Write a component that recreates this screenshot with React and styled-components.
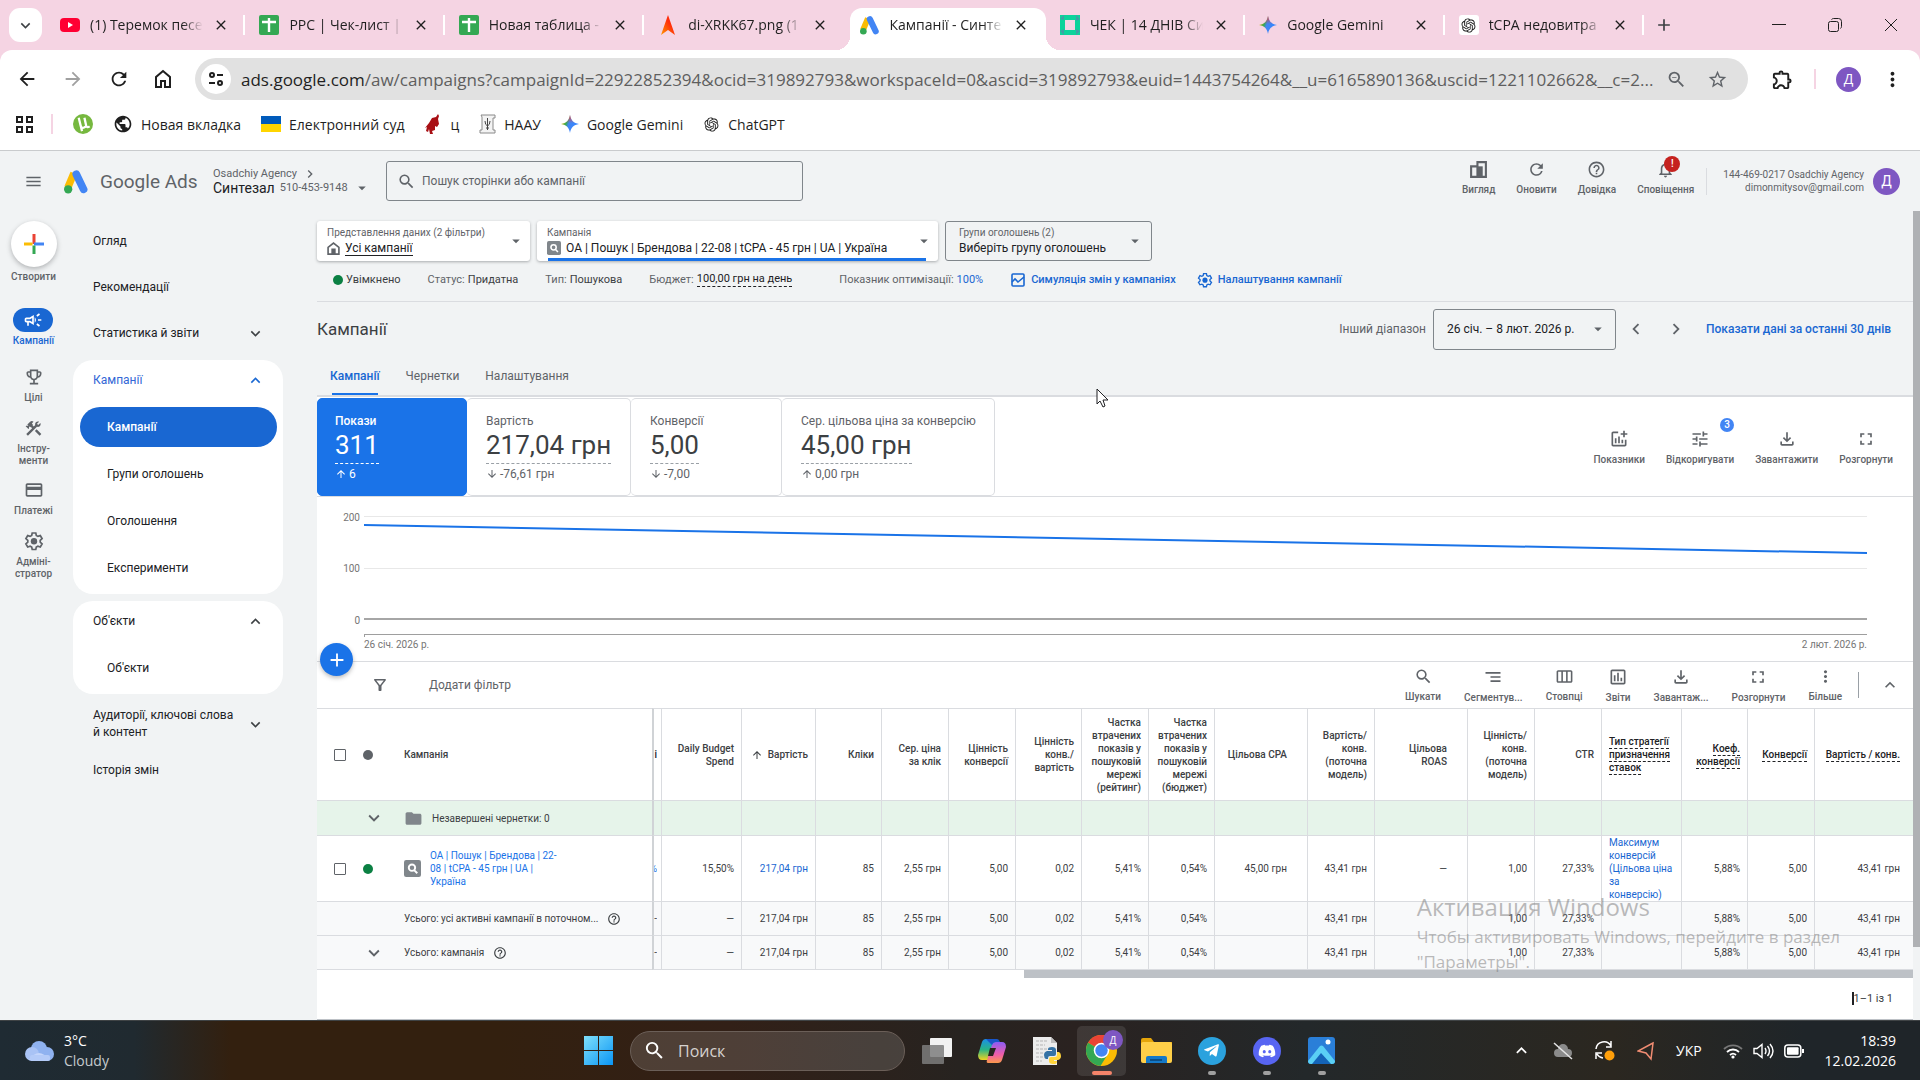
import React from 'react';
import styled, { createGlobalStyle, css } from 'styled-components';
import {
  MdMenu, MdSearch, MdRefresh, MdHelpOutline, MdNotificationsNone, MdArrowDropDown,
  MdChevronLeft, MdChevronRight, MdExpandMore, MdExpandLess, MdAdd, MdFullscreen,
  MdOutlineFileDownload, MdTune, MdOutlineAddchart, MdMoreVert, MdArrowUpward,
  MdArrowDownward, MdFolder, MdClose, MdStarBorder, MdOutlineExtension, MdZoomOut,
  MdSegment, MdOutlineFilterAlt, MdOutlineCampaign, MdOutlineEmojiEvents, MdConstruction,
  MdCreditCard, MdOutlineSettings, MdOutlineViewWeek, MdOutlineInsertChart, MdArrowBack,
  MdArrowForward, MdPublic,
} from 'react-icons/md';
import { FaDiscord, FaTelegramPlane } from 'react-icons/fa';
import { RiOpenaiFill } from 'react-icons/ri';

const ui = '"Open Sans", "Noto Sans", sans-serif';
const roboto = 'Roboto, "Liberation Sans", sans-serif';

const GlobalStyle = createGlobalStyle`
  * { box-sizing: border-box; }
  body { margin: 0; background: #f1f3f4; font-family: ${roboto}; font-size: 11px; color: #3c4043; }
  button, input, select { font: inherit; color: inherit; }
  button { background: none; border: 0; padding: 0; cursor: pointer; }
  a { color: #1967d2; text-decoration: none; }
  svg { display: block; flex: none; }
`;

const Screen = styled.div`
  position: relative;
  min-height: 100vh;
  display: flex;
  flex-direction: column;
`;

/* ---------- browser window ---------- */

const TabStrip = styled.div`
  height: 50px;
  display: flex;
  align-items: center;
  background: #f5d4e3;
  font-family: ${ui};
  padding-left: 9px;
`;
const TabSearch = styled.button`
  width: 33px;
  height: 34px;
  border-radius: 11px;
  background: #fff;
  display: flex;
  align-items: center;
  justify-content: center;
  margin-right: 4px;
`;
const TabList = styled.div`
  flex: 0 1 1598px;
  height: 100%;
  display: flex;
  min-width: 0;
`;
const Tab = styled.div`
  position: relative;
  flex: 1;
  min-width: 0;
  display: flex;
  align-items: center;
  gap: 10px;
  padding: 0 16px 0 14px;
  color: #1f1f1f;
  ${({ $active }) => $active ? css`
    margin: 8px 0 0 6px;
    padding: 0 17px 8px 10px;
    background: #fff;
    border-radius: 12px 12px 0 0;
    &::before, &::after {
      content: "";
      position: absolute;
      bottom: 0;
      width: 14px;
      height: 14px;
    }
    &::before { left: -14px; background: radial-gradient(circle at 0 0, transparent 14px, #fff 14px); }
    &::after { right: -14px; background: radial-gradient(circle at 100% 0, transparent 14px, #fff 14px); }
  ` : css`
    &::after {
      content: "";
      position: absolute;
      right: 0;
      width: 2px;
      height: 20px;
      background: ${({ $bare }) => $bare ? 'transparent' : '#fff'};
    }
  `}
`;
const TabTitle = styled.span`
  flex: 1;
  min-width: 0;
  overflow: hidden;
  white-space: nowrap;
  font-size: 14px;
  line-height: 20px;
  mask-image: linear-gradient(90deg, #000 82%, transparent);
`;
const NewTab = styled.button`
  margin-left: 10px;
`;
const WindowButtons = styled.div`
  margin-left: auto;
  display: flex;
  align-items: center;
  gap: 42px;
  padding-right: 22px;
`;
const Toolbar = styled.div`
  height: 58px;
  display: flex;
  align-items: center;
  background: linear-gradient(#f5d4e3 50%, #fff 50%);
  font-family: ${ui};
`;
const ToolbarInner = styled.div`
  flex: 1;
  height: 100%;
  min-width: 0;
  display: flex;
  align-items: center;
  background: #fff;
  border-radius: 12px 12px 0 0;
  padding: 0 16px;
`;
const NavButtons = styled.div`
  display: flex;
  align-items: center;
  gap: 24px;
  margin-right: 23px;
  color: #1f1f1f;
`;
const NavButton = styled.button`
  color: ${({ disabled }) => disabled ? '#a0a0a0' : '#1f1f1f'};
`;
const Omnibox = styled.div`
  flex: 1;
  min-width: 0;
  height: 42px;
  border-radius: 21px;
  background: #e1e1e1;
  display: flex;
  align-items: center;
  padding: 0 20px 0 6px;
  gap: 20px;
  color: #5f6368;
`;
const SiteInfo = styled.button`
  width: 30px;
  height: 30px;
  border-radius: 50%;
  background: #fff;
  display: flex;
  align-items: center;
  justify-content: center;
`;
const Url = styled.div`
  flex: 1;
  min-width: 0;
  margin: 0 -12px 0 -10px;
  overflow: hidden;
  white-space: nowrap;
  text-overflow: ellipsis;
  font-size: 17px;
  color: #5e5e5e;
  b { font-weight: 400; color: #1f1f1f; }
`;
const BrowserActions = styled.div`
  display: flex;
  align-items: center;
  gap: 20px;
  padding-left: 23px;
`;
const PinkRule = styled.span`
  width: 2px;
  height: 20px;
  background: #f5d4e3;
`;
const Avatar = styled.button`
  width: ${({ $size }) => $size}px;
  height: ${({ $size }) => $size}px;
  border-radius: 50%;
  background: #7e57c2;
  color: #fff;
  font-size: 14px;
  line-height: 1;
`;
const Bookmarks = styled.nav`
  height: 42px;
  display: flex;
  align-items: center;
  gap: 20px;
  padding: 0 16px 10px;
  background: #fff;
  font-family: ${ui};
  font-size: 14px;
`;
const AppsGroup = styled.div`
  display: flex;
  align-items: center;
  gap: 18px;
`;
const Bookmark = styled.a`
  display: flex;
  align-items: center;
  gap: 8px;
  color: #1f1f1f;
`;

/* ---------- ads header ---------- */

const Page = styled.div`
  flex: 1;
  display: flex;
  flex-direction: column;
  border-top: 1px solid #c9cbcd;
  background: #f1f3f4;
`;
const Header = styled.header`
  height: 60px;
  display: flex;
  align-items: center;
  padding: 0 20px 0 24px;
  color: #5f6368;
`;
const Brand = styled.div`
  display: flex;
  align-items: center;
  gap: 11px;
  margin-left: 21px;
  width: 149px;
  font-size: 19px;
  white-space: nowrap;
`;
const Account = styled.div`
  width: 173px;
  line-height: 14px;
`;
const AccountLine = styled.div`
  display: flex;
  align-items: center;
  gap: 5px;
  height: 14px;
  b { font-size: 14px; font-weight: 400; color: #202124; }
`;
const SearchBox = styled.label`
  width: 417px;
  height: 40px;
  border: 1px solid #80868b;
  border-radius: 3px;
  display: flex;
  align-items: center;
  gap: 4px;
  padding: 0 10px;
  input {
    flex: 1;
    border: 0;
    outline: 0;
    background: none;
    font-size: 12px;
    &::placeholder { color: #5f6368; opacity: 1; }
  }
`;
const HeaderTools = styled.div`
  margin-left: auto;
  display: flex;
  align-items: center;
  gap: 21px;
`;
const IconButton = styled.button`
  position: relative;
  display: flex;
  flex-direction: column;
  align-items: center;
  gap: 5px;
  font-size: 10px;
  font-weight: 500;
  line-height: 12px;
  white-space: nowrap;
  color: #5f6368;
  ${HeaderTools} > & { padding-bottom: 7px; }
`;
const Badge = styled.span`
  position: absolute;
  top: ${({ $top }) => $top}px;
  right: ${({ $right }) => $right}px;
  width: ${({ $size }) => $size}px;
  height: ${({ $size }) => $size}px;
  border-radius: 50%;
  background: ${({ $color }) => $color};
  color: #fff;
  font-size: 10px;
  font-weight: 500;
  line-height: ${({ $size }) => $size}px;
  text-align: center;
`;
const Profile = styled.div`
  display: flex;
  align-items: center;
  gap: 9px;
  margin-left: -9px;
  padding-left: 16px;
  border-left: 1px solid #dadce0;
  font-size: 10px;
  line-height: 13px;
  text-align: right;
`;

/* ---------- navigation ---------- */

const Body = styled.div`
  flex: 1;
  display: flex;
`;
const Rail = styled.nav`
  width: 67px;
  display: flex;
  flex-direction: column;
  align-items: center;
  padding-top: 10px;
`;
const CreateButton = styled.button`
  width: 46px;
  height: 46px;
  border-radius: 50%;
  background: #fff;
  box-shadow: 0 2px 5px rgba(60, 64, 67, .35);
  display: flex;
  align-items: center;
  justify-content: center;
`;
const CreateLabel = styled.span`
  margin: 4px 0 25px;
  font-size: 10px;
  font-weight: 500;
  line-height: 12px;
  color: #5f6368;
`;
const RailItem = styled.a`
  display: flex;
  flex-direction: column;
  align-items: center;
  gap: 3px;
  min-height: ${({ $height }) => $height}px;
  font-size: 10px;
  font-weight: 500;
  line-height: 12px;
  text-align: center;
  white-space: pre-line;
  color: ${({ $active }) => $active ? '#1967d2' : '#5f6368'};
`;
const RailIcon = styled.span`
  width: 40px;
  height: 24px;
  border-radius: 12px;
  display: flex;
  align-items: center;
  justify-content: center;
  ${({ $active }) => $active && 'background: #1967d2; color: #fff;'}
`;
const Sidebar = styled.nav`
  width: 222px;
  padding: 7px 6px 0;
  margin-right: 28px;
  font-size: 12px;
`;
const SideItem = styled.a`
  display: flex;
  align-items: center;
  justify-content: space-between;
  height: 46px;
  padding: 0 18px 0 20px;
  line-height: 17px;
  color: ${({ $open }) => $open ? '#3367d6' : '#202124'};
  svg { color: ${({ $open }) => $open ? '#1967d2' : '#3c4043'}; }
`;
const SideCard = styled.div`
  background: #fff;
  border-radius: 20px;
  margin: 4px 0 7px;
  padding-bottom: 4px;
  ${SideItem} { height: 41px; margin-bottom: 6px; }
`;
const SubItem = styled.a`
  display: flex;
  align-items: center;
  height: 40px;
  margin: 0 6px 7px 7px;
  padding-left: 27px;
  border-radius: 20px;
  font-weight: ${({ $active }) => $active ? 500 : 400};
  color: ${({ $active }) => $active ? '#fff' : '#202124'};
  background: ${({ $active }) => $active ? '#1967d2' : 'transparent'};
  &:last-child { margin-bottom: 2px; }
`;

/* ---------- main column ---------- */

const Main = styled.main`
  flex: 1;
  min-width: 0;
  padding-top: 10px;
  border-bottom: 1px solid #bdc1c6;
`;
const PageScroll = styled.div`
  width: 7px;
  background: #f1f3f4;
  &::before {
    content: "";
    display: block;
    height: 91%;
    background: #afb1b4;
  }
`;
const Pickers = styled.div`
  display: flex;
  gap: 7px;
`;
const Picker = styled.label`
  position: relative;
  width: ${({ $width }) => $width}px;
  height: 40px;
  display: flex;
  align-items: center;
  padding: ${({ $outlined }) => $outlined ? '0 7px 0 13px' : '0 5px 0 10px'};
  border-radius: 3px;
  background: ${({ $outlined }) => $outlined ? 'none' : '#fff'};
  border: ${({ $outlined }) => $outlined ? '1px solid #80868b' : 0};
  box-shadow: ${({ $outlined }) => $outlined ? 'none' : '0 1px 3px rgba(60, 64, 67, .4)'};
  ${({ $selected }) => $selected && css`
    &::after {
      content: "";
      position: absolute;
      left: 11px;
      right: 12px;
      bottom: 0;
      height: 3px;
      background: #1a73e8;
    }
  `}
`;
const PickerText = styled.span`
  flex: 1;
  min-width: 0;
  font-size: 10px;
  line-height: 14px;
  color: #5f6368;
`;
const PickerValue = styled.span`
  display: flex;
  align-items: center;
  gap: 5px;
  height: 16px;
`;
const Select = styled.select`
  appearance: none;
  border: 0;
  outline: 0;
  padding: 0;
  background: none;
  font-size: 12px;
  line-height: 14px;
  color: #202124;
  ${({ $underline }) => $underline && 'border-bottom: 1px solid #202124; border-radius: 0;'}
`;
const StatusRow = styled.div`
  display: flex;
  align-items: center;
  height: 41px;
  padding: 0 0 3px 16px;
  border-bottom: 1px solid #dadce0;
  color: #5f6368;
  gap: 27px;
  white-space: nowrap;
  b { font-weight: 400; color: #3c4043; }
`;
const StatusItem = styled.span`
  display: flex;
  align-items: center;
  gap: 3px;
  margin-right: ${({ $after }) => $after || 0}px;
`;
const StatusLink = styled.a`
  display: flex;
  align-items: center;
  gap: 5px;
  margin-right: -6px;
  font-weight: 500;
`;
const Dot = styled.span`
  display: block;
  flex: none;
  width: 10px;
  height: 10px;
  border-radius: 50%;
  background: ${({ $color }) => $color};
`;
const Dashed = styled.span`
  padding-bottom: 1px;
  border-bottom: 1px dashed #202124;
  color: #202124;
`;
const TitleRow = styled.div`
  display: flex;
  align-items: center;
  height: 54px;
  padding-right: 22px;
`;
const Title = styled.h1`
  margin: 0 auto 0 0;
  font-size: 17px;
  font-weight: 400;
  color: #3c4043;
`;
const RangeLabel = styled.label`
  display: flex;
  align-items: center;
  gap: 7px;
  font-size: 12px;
  color: #5f6368;
`;
const RangeBox = styled.span`
  width: 183px;
  height: 41px;
  display: flex;
  align-items: center;
  justify-content: space-between;
  padding: 0 8px 0 13px;
  border: 1px solid #80868b;
  border-radius: 3px;
`;
const RangeArrows = styled.div`
  display: flex;
  gap: 18px;
  margin: 0 19px 0 9px;
  color: #5f6368;
`;
const RangeLink = styled.a`
  font-size: 12px;
  font-weight: 500;
`;
const Tabs = styled.div`
  display: flex;
  height: 41px;
  gap: 26px;
  padding-left: 13px;
  border-bottom: 2px solid #dadce0;
`;
const PageTab = styled.button`
  position: relative;
  font-size: 12px;
  font-weight: ${({ $active }) => $active ? 500 : 400};
  color: ${({ $active }) => $active ? '#1967d2' : '#5f6368'};
  ${({ $active }) => $active && css`
    &::after {
      content: "";
      position: absolute;
      left: 2px;
      right: 2px;
      bottom: 0;
      height: 2px;
      background: #1a73e8;
    }
  `}
`;
const Metrics = styled.div`
  display: flex;
  align-items: center;
  background: #fff;
  height: 100px;
  border-bottom: 1px solid #dadce0;
`;
const Metric = styled.button`
  width: ${({ $width }) => $width}px;
  height: 98px;
  padding: 4px 18px 0 ${({ $active }) => $active ? 17 : 19}px;
  border: 1px solid ${({ $active }) => $active ? '#1a73e8' : '#dadce0'};
  border-left-width: ${({ $active }) => $active ? 1 : 0}px;
  border-radius: 5px;
  background: ${({ $active }) => $active ? '#1a73e8' : '#fff'};
  color: ${({ $active }) => $active ? '#fff' : '#5f6368'};
  text-align: left;
  white-space: nowrap;
`;
const MetricLabel = styled.div`
  font-size: 12px;
  font-weight: ${({ $bold }) => $bold ? 500 : 400};
  line-height: 14px;
`;
const MetricValue = styled.div`
  display: inline-block;
  font-size: 26px;
  line-height: 35px;
  border-bottom: 1px dashed ${({ $active }) => $active ? '#fff' : '#9aa0a6'};
  color: ${({ $active }) => $active ? '#fff' : '#3c4043'};
`;
const MetricDelta = styled.div`
  display: flex;
  align-items: center;
  gap: 2px;
  font-size: 12px;
  line-height: 20px;
`;
const ChartTools = styled.div`
  margin-left: auto;
  display: flex;
  gap: 21px;
  padding: 2px 20px 0 0;
`;
const Chart = styled.div`
  height: 164px;
  background: #fff;
  padding-right: 46px;
  text { font-size: 10px; fill: #757575; }
`;
const FilterBar = styled.div`
  position: relative;
  display: flex;
  align-items: center;
  height: 47px;
  padding: 0 13px 0 54px;
  background: #fff;
  border-top: 1px solid #dadce0;
  color: #5f6368;
`;
const Fab = styled.button`
  position: absolute;
  left: 3px;
  top: -19px;
  width: 33px;
  height: 33px;
  border-radius: 50%;
  background: #1a73e8;
  color: #fff;
  display: flex;
  align-items: center;
  justify-content: center;
  box-shadow: 0 2px 4px rgba(60, 64, 67, .35);
`;
const AddFilter = styled.button`
  margin-left: 40px;
  font-size: 12px;
  color: #5f6368;
`;
const TableTools = styled.div`
  margin-left: auto;
  display: flex;
  align-items: center;
  gap: 23px;
`;
const Collapse = styled.button`
  height: 26px;
  border-left: 1px solid #9aa0a6;
  padding-left: 21px;
  margin-left: -7px;
`;

/* ---------- table ---------- */

const Table = styled.table`
  width: 100%;
  table-layout: fixed;
  border-collapse: separate;
  border-spacing: 0;
  background: #fff;
  font-size: 10px;
  line-height: 13px;
  th, td {
    padding: 0 7px 0 0;
    border-left: 1px solid #dadce0;
    border-bottom: 1px solid #dadce0;
    text-align: right;
    font-weight: 400;
  }
  th { border-top: 1px solid #dadce0; font-weight: 500; white-space: pre-line; }
  th:nth-child(-n+3), td:nth-child(-n+3) { border-left: 0; text-align: left; }
  th:nth-child(4), td:nth-child(4) { border-left: 2px solid #d0d3d6; padding: 0; }
  th:nth-child(13), td:nth-child(13), th:nth-child(15), td:nth-child(15) { padding-right: 20px; }
  th:nth-child(18), td:nth-child(18) { padding: 0 7px; text-align: left; }
  th:last-child, td:last-child { padding-right: 13px; }
`;
const Row = styled.tr`
  height: ${({ $height }) => $height}px;
  background: ${({ $tone }) => $tone || '#fff'};
`;
const Check = styled.input`
  appearance: none;
  display: block;
  width: 12px;
  height: 12px;
  margin: 0 0 0 17px;
  border: 1px solid #5f6368;
  border-radius: 1px;
`;
const Lead = styled.div`
  padding-left: 8px;
  color: #5f6368;
`;
const NameCell = styled.div`
  display: flex;
  align-items: center;
  gap: 9px;
  padding-left: 5px;
  color: #3c4043;
  a { width: 132px; color: #1a73e8; }
`;
const Peek = styled.div`
  width: 3px;
  overflow: hidden;
  direction: rtl;
  color: ${({ $blue }) => $blue ? '#1a73e8' : '#3c4043'};
`;
const SortedHead = styled.span`
  display: flex;
  align-items: center;
  justify-content: flex-end;
  gap: 5px;
`;
const TableScroll = styled.div`
  height: 8px;
  background: #fff;
  &::before {
    content: "";
    display: block;
    width: 55.7%;
    height: 8px;
    margin-left: auto;
    background: #bdc1c6;
  }
`;
const Pager = styled.div`
  height: 41px;
  display: flex;
  align-items: center;
  justify-content: flex-end;
  padding-right: 20px;
  background: #fff;
  font-size: 11px;
  span { border-left: 2px solid #202124; }
`;

/* ---------- desktop ---------- */

const Watermark = styled.div`
  position: absolute;
  right: 80px;
  bottom: 106px;
  font-family: ${ui};
  font-size: 17px;
  line-height: 25px;
  color: rgba(120, 120, 120, .5);
  pointer-events: none;
  strong { display: block; font-size: 24px; font-weight: 400; line-height: 34px; }
`;
const Pointer = styled.svg`
  position: absolute;
  left: 1096px;
  top: 388px;
`;
const Taskbar = styled.footer`
  height: 60px;
  display: grid;
  grid-template-columns: 1fr auto 1fr;
  align-items: center;
  padding: 0 24px;
  border-top: 1px solid #3f4345;
  background: linear-gradient(90deg, #1f2b33 0, #202a30 7%, #33200f 12%, #33200f 26%, #322017 38%, #272320 50%, #2a2220 56%, #23282a 68%, #2b2720 84%, #1f2529 94%);
  color: #fff;
  font-family: ${ui};
  font-size: 14px;
  line-height: 20px;
`;
const Weather = styled.div`
  display: flex;
  align-items: center;
  gap: 9px;
  span { color: #c5cacd; }
`;
const Dock = styled.div`
  display: flex;
  align-items: center;
  padding-left: 13px;
`;
const StartSearch = styled.label`
  width: 275px;
  height: 40px;
  margin: 0 4px 0 17px;
  border: 1px solid #6b5f58;
  border-radius: 20px;
  background: rgba(255, 255, 255, .14);
  display: flex;
  align-items: center;
  gap: 10px;
  padding: 0 14px 0 12px;
  input {
    min-width: 0;
    flex: 1;
    border: 0;
    outline: 0;
    background: none;
    font-size: 16px;
    &::placeholder { color: #d6d2cf; opacity: 1; }
  }
`;
const DockApp = styled.button`
  position: relative;
  width: 49px;
  height: 50px;
  margin: 0 3px;
  border-radius: 5px;
  display: flex;
  align-items: center;
  justify-content: center;
  background: ${({ $current }) => $current ? 'rgba(255, 255, 255, .1)' : 'none'};
  &::after {
    content: "";
    position: absolute;
    bottom: 1px;
    width: ${({ $current }) => $current ? 20 : 8}px;
    height: 4px;
    border-radius: 2px;
    background: ${({ $current, $running }) => $current ? '#f4846a' : $running ? '#a0a0a0' : 'transparent'};
  }
`;
const Round = styled.span`
  width: 28px;
  height: 28px;
  border-radius: 50%;
  display: flex;
  align-items: center;
  justify-content: center;
  color: #fff;
  background: ${({ $color }) => $color};
`;
const Tray = styled.div`
  justify-self: end;
  display: flex;
  align-items: center;
  gap: 21px;
`;
const TrayGroup = styled.div`
  display: flex;
  align-items: center;
  gap: 10px;
`;
const Clock = styled.div`
  text-align: right;
`;

/* ---------- drawings ---------- */

const AdsLogo = ({ size = 25 }) => (
  <svg width={size} height={size} viewBox="0 0 24 24">
    <path d="M9.500 4L3.600 18" stroke="#fbbc04" strokeWidth="7" strokeLinecap="butt" />
    <path d="M11.800 5l7 14.500" stroke="#4285f4" strokeWidth="7.400" strokeLinecap="round" />
    <circle cx="4" cy="19.500" r="4" fill="#34a853" />
  </svg>
);

const YouTube = () => (
  <svg width="20" height="20" viewBox="0 0 20 20">
    <rect y="3" width="20" height="14" rx="4" fill="#f03" />
    <path d="M8 7l5 3-5 3z" fill="#fff" />
  </svg>
);

const Sheets = () => (
  <svg width="20" height="20" viewBox="0 0 20 20">
    <rect width="20" height="20" rx="2" fill="#34a853" />
    <path d="M10 3v14M3 7h14" stroke="#fff" strokeWidth="2.400" />
  </svg>
);

const RedArrow = () => (
  <svg width="20" height="20" viewBox="0 0 20 20">
    <defs>
      <linearGradient id="flame" x1="0" y1="1" x2="1" y2="0">
        <stop offset="0" stopColor="#ff9800" />
        <stop offset=".6" stopColor="#ff2d0a" />
      </linearGradient>
    </defs>
    <path d="M10 0l7 20-7-5-7 5z" fill="url(#flame)" />
  </svg>
);

const GreenSquare = () => (
  <svg width="20" height="20" viewBox="0 0 20 20">
    <rect x="2.500" y="2.500" width="15" height="15" fill="none" stroke="#0cd39b" strokeWidth="5" />
    <path d="M0 4l4-4v5zM16 0l4 4-4 2zM0 16l4-2v6zM20 16l-4 4v-6z" fill="#3f9fa5" />
  </svg>
);

const Gemini = () => (
  <svg width="18" height="20" viewBox="0 0 20 20">
    <defs>
      <linearGradient id="gem" x1="0" y1=".3" x2="1" y2=".6">
        <stop offset="0" stopColor="#fbbc04" />
        <stop offset=".3" stopColor="#34a853" />
        <stop offset=".45" stopColor="#4285f4" />
        <stop offset="1" stopColor="#3186ff" />
      </linearGradient>
      <linearGradient id="gemTop" x1="0" y1="0" x2="0" y2="1">
        <stop offset="0" stopColor="#ea4335" />
        <stop offset=".45" stopColor="#ea4335" stopOpacity="0" />
      </linearGradient>
    </defs>
    <path d="M10 0c1 6 4 9 10 10-6 1-9 4-10 10-1-6-4-9-10-10 6-1 9-4 10-10z" fill="url(#gem)" />
    <path d="M10 0c1 6 4 9 10 10-6 1-9 4-10 10-1-6-4-9-10-10 6-1 9-4 10-10z" fill="url(#gemTop)" />
  </svg>
);

const GptTile = styled.span`
  width: 20px;
  height: 20px;
  border-radius: 3px;
  background: #fff;
  display: flex;
  align-items: center;
  justify-content: center;
`;

const Torrent = () => (
  <svg width="20" height="20" viewBox="0 0 21 21">
    <circle cx="10.500" cy="10.500" r="10.500" fill="#76b83f" />
    <path d="M6 4l2 8q1 4 4 2l2-1-2-9M13.500 12q1 3 4 1M8 12l1.500 6" fill="none" stroke="#fff" strokeWidth="2.400" />
  </svg>
);

const Flag = () => (
  <svg width="20" height="16" viewBox="0 0 20 16">
    <rect width="20" height="8" fill="#005bbb" />
    <rect y="8" width="20" height="8" fill="#ffd500" />
  </svg>
);

const RedFigure = () => (
  <svg width="18" height="20" viewBox="0 0 18 20">
    <path d="M14 0l1 2-1 3 1 5-2 3-2-1v4l-3 1 1 3H6l-1-5-1 3-2-1 1-4-2 1 4-5 3-5 4-1z" fill="#a80f14" />
  </svg>
);

const Parchment = () => (
  <svg width="17" height="20" viewBox="0 0 17 20" fill="none" stroke="#8a8a8a">
    <path d="M2 1h14v3h-2v12h2v3H1v-3h2V3z" fill="#f3f3f3" />
    <path d="M8.500 4v12M6 7q0 4 2.500 5Q11 11 11 7M7 14h3" stroke="#444" />
  </svg>
);

const AppsGrid = () => (
  <svg width="17" height="18" viewBox="0 0 17 18" fill="none" stroke="#1f1f1f" strokeWidth="2">
    <path d="M1 2h5v5H1zM11 2h5v5h-5zM1 12h5v5H1zM11 12h5v5h-5z" />
  </svg>
);

const HomeArch = () => (
  <svg width="13" height="13" viewBox="0 0 12 12" fill="none" stroke="#5f6368" strokeWidth="1.500">
    <path d="M1 11.200V5L6 1l5 4v6.200z" />
    <path d="M4 6h4v6H4z" fill="#5f6368" stroke="none" />
  </svg>
);

const BrowserHome = () => (
  <svg width="18" height="20" viewBox="0 0 18 20" fill="none" stroke="#1f1f1f" strokeWidth="2">
    <path d="M2 18V8l7-6 7 6v10h-5v-6H7v6z" />
  </svg>
);

const SearchTile = ({ size = 14 }) => (
  <svg width={size} height={size} viewBox="0 0 16 16">
    <rect width="16" height="16" rx="2" fill="#80868b" />
    <circle cx="7.500" cy="7.200" r="3" fill="none" stroke="#fff" strokeWidth="1.800" />
    <path d="M9.500 9.500l3 3" stroke="#fff" strokeWidth="1.800" />
  </svg>
);

const TuneDots = () => (
  <svg width="16" height="14" viewBox="0 0 16 14" fill="none" stroke="#1f1f1f" strokeWidth="2">
    <circle cx="4" cy="3" r="2" />
    <path d="M9 3h6M1 11h6" />
    <circle cx="12" cy="11" r="2" />
  </svg>
);

const CreatePlus = () => (
  <svg width="20" height="20" viewBox="0 0 20 20">
    <path d="M8.500 0h3v10h-3z" fill="#ea4335" />
    <path d="M0 8.500h8.500v3H0z" fill="#fbbc04" />
    <path d="M10 8.500h10v3H10z" fill="#4285f4" />
    <path d="M8.500 11.500h3V20h-3z" fill="#34a853" />
  </svg>
);

const Gear = ({ size }) => (
  <svg width={size} height={size} viewBox="0 0 20 20">
    <path d="M8.200 2h3.600l.5 2.500 1.600.9 2.400-.8 1.800 3.100-1.900 1.700v1.800l1.900 1.700-1.800 3.100-2.400-.8-1.600.9-.5 2.400H8.200l-.5-2.400-1.600-.9-2.400.8-1.800-3.100 1.900-1.700V9.400L1.900 7.700l1.800-3.100 2.400.8 1.600-.9z" fill="none" stroke="currentColor" strokeWidth="1.700" />
    <circle cx="10" cy="10.200" r="3.200" fill="currentColor" />
  </svg>
);

const ViewIcon = () => (
  <svg width="19" height="19" viewBox="0 0 18 18" fill="none" stroke="#5f6368" strokeWidth="2">
    <path d="M8 5V2h8v14H8M2 6h6v10H2z" />
    <path d="M8 6h5v10H8z" fill="#5f6368" stroke="none" />
  </svg>
);

const Simulation = () => (
  <svg width="16" height="16" viewBox="0 0 16 16" fill="none" stroke="#1967d2" strokeWidth="1.600">
    <rect x="2" y="2" width="12" height="12" rx="1" />
    <path d="M2 10l3-3 3 3 6-5" />
  </svg>
);

const WinLogo = () => (
  <svg width="29" height="29" viewBox="0 0 29 29">
    <defs>
      <linearGradient id="win" x1="0" y1="0" x2="1" y2="1">
        <stop offset="0" stopColor="#7fe0fb" />
        <stop offset="1" stopColor="#0a95f5" />
      </linearGradient>
    </defs>
    <path d="M0 0h14v14H0zM15 0h14v14H15zM0 15h14v14H0zM15 15h14v14H15z" fill="url(#win)" />
  </svg>
);

const Cloud = () => (
  <svg width="31" height="22" viewBox="0 0 31 22">
    <circle cx="15" cy="9" r="8" fill="#8fb2f0" />
    <circle cx="8" cy="14" r="7" fill="#a9c3f5" />
    <circle cx="23" cy="14" r="7" fill="#8fb2f0" />
    <path d="M5 20q10-14 20 0z" fill="#c4d6fb" />
    <rect x="6" y="15" width="20" height="6" rx="2" fill="#b4cbf8" />
  </svg>
);

const TaskView = () => (
  <svg width="30" height="28" viewBox="0 0 30 28">
    <rect x="8" y="1" width="22" height="19" rx="1" fill="#f2f2f2" />
    <rect y="8" width="22" height="19" rx="1" fill="#7c7c7c" fillOpacity=".85" />
  </svg>
);

const Copilot = () => (
  <svg width="28" height="26" viewBox="0 0 28 26">
    <defs>
      <linearGradient id="copA" x1="0" y1="0" x2="0" y2="1">
        <stop offset="0" stopColor="#1a8fe8" />
        <stop offset=".5" stopColor="#28b487" />
        <stop offset="1" stopColor="#f2d21f" />
      </linearGradient>
      <linearGradient id="copB" x1="0" y1="0" x2="0" y2="1">
        <stop offset="0" stopColor="#8b5cf6" />
        <stop offset=".6" stopColor="#ef5da8" />
        <stop offset="1" stopColor="#fb9a4b" />
      </linearGradient>
    </defs>
    <path d="M18 1q2 0 1 3l-5 15q-1 3-4 3H4q-4 0-4-5L4 4q1-3 4-3z" fill="url(#copA)" />
    <path d="M10 25q-2 0-1-3l5-15q1-3 4-3h6q4 0 4 5l-4 13q-1 3-4 3z" fill="url(#copB)" />
    <path d="M12 10h6l-3 8h-5z" fill="#26241f" />
    <path d="M8 1h11q2 0 3 3h-4q-3 0-4 3z" fill="#1856c9" />
  </svg>
);

const PythonFile = () => (
  <svg width="30" height="28" viewBox="0 0 30 28">
    <path d="M1 0h18l6 6v22H1z" fill="#ececec" />
    <path d="M19 0l6 6h-6z" fill="#bdbdbd" />
    <path d="M4 4h11M4 8h9M4 12h11M4 16h7M4 20h8M4 24h6" stroke="#b4b4b4" strokeDasharray="3 1" />
    <path d="M20 10q4 0 4 3v4q0 2-2 2h-4q-2 0-2 2v1h-2q-2-1-2-4t3-4h5v-1h-4v-1q0-2 4-2z" fill="#3572a5" />
    <path d="M21 27q-4 0-4-3v-2q0-2 2-2h4q2 0 2-2v-3h2q2 1 2 4t-3 4h-4v1h3q0 3-2 3z" fill="#ffd43b" />
  </svg>
);

const Chrome = () => (
  <svg width="31" height="31" viewBox="0 0 30 30">
    <circle cx="15" cy="15" r="15" fill="#fbbc04" />
    <path d="M15 15L2 7.500A15 15 0 0 1 28 7.500z" fill="#ea4335" />
    <path d="M15 15L2 7.500A15 15 0 0 0 14 30l7.500-12z" fill="#34a853" />
    <circle cx="15" cy="15" r="7.500" fill="#fff" />
    <circle cx="15" cy="15" r="6" fill="#4285f4" />
  </svg>
);

const Explorer = () => (
  <svg width="31" height="28" viewBox="0 0 31 28">
    <path d="M0 3q0-2 2-2h8l3 4h18v8H0z" fill="#e5a50a" />
    <rect y="5" width="31" height="21" rx="2" fill="#ffcf48" />
    <path d="M5 26v-5q0-2 2-2h17q2 0 2 2v5z" fill="#1579c8" />
    <path d="M9 23h12" stroke="#0b4f88" strokeWidth="2" />
  </svg>
);

const Photos = () => (
  <svg width="27" height="27" viewBox="0 0 27 27">
    <rect width="27" height="27" rx="3" fill="#2a7fd8" />
    <path d="M0 24L12 9q1.500-1 3 0l12 15q0 3-3 3H3q-3 0-3-3z" fill="#5ad0f5" />
    <path d="M4 27l9-11 10 11z" fill="#1464b8" />
    <circle cx="20" cy="5" r="2.500" fill="#fff" />
  </svg>
);

const TrayIcons = {
  cloud: (
    <svg width="20" height="18" viewBox="0 0 20 18">
      <path d="M5 15a4 4 0 0 1 0-8 5 5 0 0 1 10 0 4 4 0 0 1 0 8z" fill="#8b8b8b" />
      <path d="M1 1l18 16" stroke="#e5e5e5" strokeWidth="1.500" />
    </svg>
  ),
  sync: (
    <svg width="22" height="22" viewBox="0 0 22 22" fill="none" stroke="#fff" strokeWidth="1.500">
      <path d="M2 9a8 8 0 0 1 15-3M17 1v6h-5M9 18a8 8 0 0 1-6-4M2 19v-6h6" />
      <circle cx="15.500" cy="15.500" r="5" fill="#ff9f0a" stroke="none" />
    </svg>
  ),
  location: (
    <svg width="18" height="20" viewBox="0 0 18 20" fill="none" stroke="#f08c72" strokeWidth="1.500">
      <path d="M16 2L1 10l8 2 5 6z" />
    </svg>
  ),
  wifi: (
    <svg width="20" height="16" viewBox="0 0 20 16" fill="none" strokeWidth="1.800">
      <path d="M1 6a13 13 0 0 1 18 0" stroke="#777" />
      <path d="M4 9a8.500 8.500 0 0 1 12 0M7 12a4.500 4.500 0 0 1 6 0" stroke="#fff" />
      <circle cx="10" cy="14" r="1.600" fill="#fff" />
    </svg>
  ),
  volume: (
    <svg width="21" height="16" viewBox="0 0 21 16" fill="none" stroke="#fff" strokeWidth="1.400">
      <path d="M1 5.500h3L9 1.500v13l-5-4H1zM12 5q2 3 0 6M14.500 3q4 5 0 10M17 1q6 7 0 14" />
    </svg>
  ),
  battery: (
    <svg width="20" height="14" viewBox="0 0 20 14">
      <rect x=".8" y="1" width="16" height="12" rx="3" fill="none" stroke="#fff" strokeWidth="1.500" />
      <rect x="3" y="3.200" width="11.600" height="7.600" rx="1" fill="#fff" />
      <path d="M18 5h2v4h-2z" fill="#fff" />
    </svg>
  ),
};

/* ---------- data ---------- */

const browserTabs = [
  { title: '(1) Теремок песе', icon: <YouTube /> },
  { title: 'PPC | Чек-лист |', icon: <Sheets /> },
  { title: 'Новая таблица -', icon: <Sheets /> },
  { title: 'di-XRKK67.png (1', icon: <RedArrow />, bare: true },
  { title: 'Кампанії - Синте', icon: <AdsLogo size={20} />, active: true },
  { title: 'ЧЕК | 14 ДНІВ Си', icon: <GreenSquare /> },
  { title: 'Google Gemini', icon: <Gemini /> },
  { title: 'tCPA недовитра', icon: <GptTile><RiOpenaiFill size={17} /></GptTile> },
];

const metrics = [
  { label: 'Покази', value: '311', delta: '6', up: true, width: 150, active: true },
  { label: 'Вартість', value: '217,04 грн', delta: '-76,61 грн', width: 164 },
  { label: 'Конверсії', value: '5,00', delta: '-7,00', width: 151 },
  { label: 'Сер. цільова ціна за конверсію', value: '45,00 грн', delta: '0,00 грн', up: true, width: 213 },
];

const columns = [38, 44, 253, 9, 80, 74, 66, 67, 67, 66, 67, 66, 93, 67, 93, 67, 67, 80, 66, 67];

const heads = [
  'Daily Budget\nSpend',
  <SortedHead key="cost"><MdArrowUpward size={12} />Вартість</SortedHead>,
  'Кліки',
  'Сер. ціна\nза клік',
  'Цінність\nконверсії',
  'Цінність\nконв./\nвартість',
  'Частка\nвтрачених\nпоказів у\nпошуковій\nмережі\n(рейтинг)',
  'Частка\nвтрачених\nпоказів у\nпошуковій\nмережі\n(бюджет)',
  'Цільова CPA',
  'Вартість/\nконв.\n(поточна\nмодель)',
  'Цільова\nROAS',
  'Цінність/\nконв.\n(поточна\nмодель)',
  'CTR',
  <Dashed key="strategy">{'Тип стратегії\nпризначення\nставок'}</Dashed>,
  <Dashed key="rate">{'Коеф.\nконверсії'}</Dashed>,
  <Dashed key="conv">Конверсії</Dashed>,
  <Dashed key="cpc">Вартість / конв.</Dashed>,
];

const campaign = ['15,50%', <a key="c" href="#cost">217,04 грн</a>, '85', '2,55 грн', '5,00', '0,02', '5,41%', '0,54%',
  '45,00 грн', '43,41 грн', '—', '1,00', '27,33%',
  <a key="s" href="#strategy">Максимум конверсій (Цільова ціна за конверсію)</a>, '5,88%', '5,00', '43,41 грн'];
const totals = ['—', '217,04 грн', '85', '2,55 грн', '5,00', '0,02', '5,41%', '0,54%',
  '', '43,41 грн', '', '1,00', '27,33%', '', '5,88%', '5,00', '43,41 грн'];

const Tool = ({ icon, label, children }) => (
  <IconButton>{icon}{label}{children}</IconButton>
);

const Browser = () => (
  <>
    <TabStrip>
      <TabSearch aria-label="Пошук вкладок"><MdExpandMore size={19} /></TabSearch>
      <TabList>
        {browserTabs.map((tab) => (
          <Tab key={tab.title} $active={tab.active} $bare={tab.bare}>
            {tab.icon}
            <TabTitle>{tab.title}</TabTitle>
            <button aria-label="Закрити"><MdClose size={16} /></button>
          </Tab>
        ))}
      </TabList>
      <NewTab aria-label="Нова вкладка"><MdAdd size={20} /></NewTab>
      <WindowButtons>
        <button aria-label="Згорнути">
          <svg width="14" height="14" viewBox="0 0 14 14" stroke="#1f1f1f"><path d="M0 6.500h14" /></svg>
        </button>
        <button aria-label="Відновити">
          <svg width="14" height="14" viewBox="0 0 14 14" fill="none" stroke="#1f1f1f">
            <rect x=".5" y="3.500" width="10" height="10" rx="2" />
            <path d="M3.500 1.500q1-1 2-1h5q3 0 3 3v5q0 1-1 2" />
          </svg>
        </button>
        <button aria-label="Закрити вікно">
          <svg width="14" height="14" viewBox="0 0 14 14" stroke="#1f1f1f"><path d="M1 1l12 12M13 1L1 13" /></svg>
        </button>
      </WindowButtons>
    </TabStrip>
    <Toolbar>
      <ToolbarInner>
        <NavButtons>
          <NavButton aria-label="Назад"><MdArrowBack size={22} /></NavButton>
          <NavButton aria-label="Вперед" disabled><MdArrowForward size={22} /></NavButton>
          <NavButton aria-label="Оновити сторінку"><MdRefresh size={22} /></NavButton>
          <NavButton aria-label="Головна"><BrowserHome /></NavButton>
        </NavButtons>
        <Omnibox>
          <SiteInfo aria-label="Відомості про сайт"><TuneDots /></SiteInfo>
          <Url>
            <b>ads.google.com</b>/aw/campaigns?campaignId=22922852394&amp;ocid=319892793&amp;workspaceId=0&amp;ascid=319892793&amp;euid=1443754264&amp;__u=6165890136&amp;uscid=1221102662&amp;__c=2...
          </Url>
          <MdZoomOut size={21} />
          <MdStarBorder size={21} />
        </Omnibox>
        <BrowserActions>
          <MdOutlineExtension size={23} color="#1f1f1f" />
          <PinkRule />
          <Avatar $size={25}>Д</Avatar>
          <MdMoreVert size={23} color="#1f1f1f" />
        </BrowserActions>
      </ToolbarInner>
    </Toolbar>
    <Bookmarks>
      <AppsGroup><AppsGrid /><PinkRule /></AppsGroup>
      <Bookmark href="#torrent" aria-label="Torrent"><Torrent /></Bookmark>
      <Bookmark href="#new"><MdPublic size={20} />Новая вкладка</Bookmark>
      <Bookmark href="#court"><Flag />Електронний суд</Bookmark>
      <Bookmark href="#ts"><RedFigure />ц</Bookmark>
      <Bookmark href="#naau"><Parchment />НААУ</Bookmark>
      <Bookmark href="#gemini"><Gemini />Google Gemini</Bookmark>
      <Bookmark href="#gpt"><RiOpenaiFill size={17} />ChatGPT</Bookmark>
    </Bookmarks>
  </>
);

const AdsHeader = () => (
  <Header>
    <button aria-label="Меню"><MdMenu size={19} /></button>
    <Brand><AdsLogo />Google Ads</Brand>
    <Account>
      <AccountLine>Osadchiy Agency <MdChevronRight size={16} /></AccountLine>
      <AccountLine><b>Синтезал</b>510-453-9148<MdArrowDropDown size={18} /></AccountLine>
    </Account>
    <SearchBox>
      <MdSearch size={19} />
      <input aria-label="Пошук" placeholder="Пошук сторінки або кампанії" />
    </SearchBox>
    <HeaderTools>
      <Tool icon={<ViewIcon />} label="Вигляд" />
      <Tool icon={<MdRefresh size={19} />} label="Оновити" />
      <Tool icon={<MdHelpOutline size={19} />} label="Довідка" />
      <Tool icon={<MdNotificationsNone size={19} />} label="Сповіщення">
        <Badge $top={-4} $right={14} $size={16} $color="#c5221f">!</Badge>
      </Tool>
      <Profile>
        <div>144-469-0217 Osadchiy Agency<br />dimonmitysov@gmail.com</div>
        <Avatar $size={27}>Д</Avatar>
      </Profile>
    </HeaderTools>
  </Header>
);

const Navigation = () => (
  <>
    <Rail>
      <CreateButton aria-label="Створити"><CreatePlus /></CreateButton>
      <CreateLabel>Створити</CreateLabel>
      <RailItem href="#campaigns" $active $height={57}>
        <RailIcon $active><MdOutlineCampaign size={20} /></RailIcon>Кампанії
      </RailItem>
      <RailItem href="#goals" $height={51}><RailIcon><MdOutlineEmojiEvents size={20} /></RailIcon>Цілі</RailItem>
      <RailItem href="#tools" $height={62}><RailIcon><MdConstruction size={19} /></RailIcon>{'Інстру-\nменти'}</RailItem>
      <RailItem href="#billing" $height={51}><RailIcon><MdCreditCard size={20} /></RailIcon>Платежі</RailItem>
      <RailItem href="#admin" $height={62}><RailIcon><Gear size={20} /></RailIcon>{'Адміні-\nстратор'}</RailItem>
    </Rail>
    <Sidebar>
      <SideItem href="#overview">Огляд</SideItem>
      <SideItem href="#recommendations">Рекомендації</SideItem>
      <SideItem href="#insights">Статистика й звіти<MdExpandMore size={19} /></SideItem>
      <SideCard>
        <SideItem href="#campaigns" $open>Кампанії<MdExpandLess size={19} /></SideItem>
        <SubItem href="#campaigns" $active>Кампанії</SubItem>
        <SubItem href="#groups">Групи оголошень</SubItem>
        <SubItem href="#ads">Оголошення</SubItem>
        <SubItem href="#experiments">Експерименти</SubItem>
      </SideCard>
      <SideCard>
        <SideItem href="#assets">Об'єкти<MdExpandLess size={19} /></SideItem>
        <SubItem href="#assets">Об'єкти</SubItem>
      </SideCard>
      <SideItem href="#audiences"><span>Аудиторії, ключові слова<br />й контент</span><MdExpandMore size={19} /></SideItem>
      <SideItem href="#history">Історія змін</SideItem>
    </Sidebar>
  </>
);

const Filters = () => (
  <>
    <Pickers>
      <Picker $width={213}>
        <PickerText>Представлення даних (2 фільтри)
          <PickerValue><HomeArch /><Select $underline><option>Усі кампанії</option></Select></PickerValue>
        </PickerText>
        <MdArrowDropDown size={18} color="#5f6368" />
      </Picker>
      <Picker $width={401} $selected>
        <PickerText>Кампанія
          <PickerValue><SearchTile /><Select><option>ОА | Пошук | Брендова | 22-08 | tCPA - 45 грн | UA | Україна</option></Select></PickerValue>
        </PickerText>
        <MdArrowDropDown size={18} color="#5f6368" />
      </Picker>
      <Picker $width={207} $outlined>
        <PickerText>Групи оголошень (2)
          <PickerValue><Select><option>Виберіть групу оголошень</option></Select></PickerValue>
        </PickerText>
        <MdArrowDropDown size={18} color="#5f6368" />
      </Picker>
    </Pickers>
    <StatusRow>
      <StatusItem><Dot $color="#0b8043" /><b>Увімкнено</b></StatusItem>
      <StatusItem>Статус: <b>Придатна</b></StatusItem>
      <StatusItem>Тип: <b>Пошукова</b></StatusItem>
      <StatusItem $after={20}>Бюджет: <Dashed>100,00 грн на день</Dashed></StatusItem>
      <StatusItem>Показник оптимізації: <a href="#score">100%</a></StatusItem>
      <StatusLink href="#simulate"><Simulation />Симуляція змін у кампаніях</StatusLink>
      <StatusLink href="#settings"><Gear size={16} />Налаштування кампанії</StatusLink>
    </StatusRow>
    <TitleRow>
      <Title>Кампанії</Title>
      <RangeLabel>
        Інший діапазон
        <RangeBox>
          <Select><option>26 січ. – 8 лют. 2026 р.</option></Select>
          <MdArrowDropDown size={18} />
        </RangeBox>
      </RangeLabel>
      <RangeArrows>
        <button aria-label="Попередній період"><MdChevronLeft size={22} /></button>
        <button aria-label="Наступний період"><MdChevronRight size={22} /></button>
      </RangeArrows>
      <RangeLink href="#last30">Показати дані за останні 30 днів</RangeLink>
    </TitleRow>
    <Tabs>
      <PageTab $active>Кампанії</PageTab>
      <PageTab>Чернетки</PageTab>
      <PageTab>Налаштування</PageTab>
    </Tabs>
  </>
);

const Overview = () => (
  <>
    <Metrics>
      {metrics.map((m) => (
        <Metric key={m.label} $width={m.width} $active={m.active}>
          <MetricLabel $bold={m.active}>{m.label}</MetricLabel>
          <MetricValue $active={m.active}>{m.value}</MetricValue>
          <MetricDelta>{m.up ? <MdArrowUpward size={12} /> : <MdArrowDownward size={12} />}{m.delta}</MetricDelta>
        </Metric>
      ))}
      <ChartTools>
        <Tool icon={<MdOutlineAddchart size={20} />} label="Показники" />
        <Tool icon={<MdTune size={20} />} label="Відкоригувати">
          <Badge $top={-11} $right={0} $size={14} $color="#4285f4">3</Badge>
        </Tool>
        <Tool icon={<MdOutlineFileDownload size={20} />} label="Завантажити" />
        <Tool icon={<MdFullscreen size={20} />} label="Розгорнути" />
      </ChartTools>
    </Metrics>
    <Chart>
      <svg width="100%" height="164">
        <text x="43" y="24" textAnchor="end">200</text>
        <text x="43" y="75" textAnchor="end">100</text>
        <text x="43" y="127" textAnchor="end">0</text>
        <line x1="47" x2="100%" y1="19.500" y2="19.500" stroke="#e8e8e8" />
        <line x1="47" x2="100%" y1="71.500" y2="71.500" stroke="#e8e8e8" />
        <line x1="47" x2="100%" y1="122" y2="122" stroke="#a6a6a6" strokeWidth="2" />
        <line x1="47" x2="100%" y1="137.500" y2="137.500" stroke="#9e9e9e" />
        <line x1="47.500" x2="47.500" y1="137" y2="140" stroke="#9e9e9e" />
        <line x1="47" x2="100%" y1="28" y2="56" stroke="#1a73e8" strokeWidth="2" />
        <text x="47" y="151">26 січ. 2026 р.</text>
        <text x="100%" y="151" textAnchor="end">2 лют. 2026 р.</text>
      </svg>
    </Chart>
    <FilterBar>
      <Fab aria-label="Нова кампанія"><MdAdd size={22} /></Fab>
      <MdOutlineFilterAlt size={18} />
      <AddFilter>Додати фільтр</AddFilter>
      <TableTools>
        <Tool icon={<MdSearch size={19} />} label="Шукати" />
        <Tool icon={<MdSegment size={20} />} label="Сегментув..." />
        <Tool icon={<MdOutlineViewWeek size={19} />} label="Стовпці" />
        <Tool icon={<MdOutlineInsertChart size={20} />} label="Звіти" />
        <Tool icon={<MdOutlineFileDownload size={20} />} label="Завантаж..." />
        <Tool icon={<MdFullscreen size={20} />} label="Розгорнути" />
        <Tool icon={<MdMoreVert size={19} />} label="Більше" />
        <Collapse aria-label="Згорнути таблицю"><MdExpandLess size={20} /></Collapse>
      </TableTools>
    </FilterBar>
  </>
);

const CampaignTable = () => (
  <>
    <Table>
      <colgroup>
        {columns.map((width, i) => <col key={i} width={width} />)}
        <col />
      </colgroup>
      <thead>
        <Row $height={93}>
          <th><Check type="checkbox" aria-label="Вибрати всі" /></th>
          <th><Lead><Dot $color="#5f6368" /></Lead></th>
          <th><NameCell>Кампанія</NameCell></th>
          <th><Peek><Dashed>і</Dashed></Peek></th>
          {heads.map((head, i) => <th key={i}>{head}</th>)}
        </Row>
      </thead>
      <tbody>
        <Row $height={35} $tone="#e6f4ea">
          <td />
          <td><Lead><MdExpandMore size={22} /></Lead></td>
          <td><NameCell><MdFolder size={19} color="#80868b" />Незавершені чернетки: 0</NameCell></td>
          <td />
          {totals.map((_, i) => <td key={i} />)}
        </Row>
        <Row $height={66}>
          <td><Check type="checkbox" aria-label="Вибрати кампанію" /></td>
          <td><Lead><Dot $color="#0b8043" /></Lead></td>
          <td><NameCell><SearchTile size={17} /><a href="#campaign">ОА | Пошук | Брендова | 22-08 | tCPA - 45 грн | UA | Україна</a></NameCell></td>
          <td><Peek $blue>%</Peek></td>
          {campaign.map((cell, i) => <td key={i}>{cell}</td>)}
        </Row>
        <Row $height={34} $tone="#f8f9fa">
          <td />
          <td />
          <td><NameCell>Усього: усі активні кампанії в поточном... <MdHelpOutline size={14} /></NameCell></td>
          <td><Peek>-</Peek></td>
          {totals.map((cell, i) => <td key={i}>{cell}</td>)}
        </Row>
        <Row $height={34} $tone="#f8f9fa">
          <td />
          <td><Lead><MdExpandMore size={22} /></Lead></td>
          <td><NameCell>Усього: кампанія <MdHelpOutline size={14} /></NameCell></td>
          <td><Peek>-</Peek></td>
          {totals.map((cell, i) => <td key={i}>{cell}</td>)}
        </Row>
      </tbody>
    </Table>
    <TableScroll />
    <Pager><span>1–1 із 1</span></Pager>
  </>
);

const Desktop = () => (
  <Taskbar>
    <Weather><Cloud /><div>3°C<br /><span>Cloudy</span></div></Weather>
    <Dock>
      <button aria-label="Пуск"><WinLogo /></button>
      <StartSearch>
        <MdSearch size={23} />
        <input aria-label="Поиск" placeholder="Поиск" />
      </StartSearch>
      <DockApp aria-label="Task view"><TaskView /></DockApp>
      <DockApp aria-label="Copilot"><Copilot /></DockApp>
      <DockApp aria-label="Python"><PythonFile /></DockApp>
      <DockApp aria-label="Chrome" $current>
        <Chrome />
        <Badge $top={4} $right={3} $size={20} $color="#7e57c2">Д</Badge>
      </DockApp>
      <DockApp aria-label="Explorer"><Explorer /></DockApp>
      <DockApp aria-label="Telegram" $running><Round $color="#2ba2de"><FaTelegramPlane size={17} /></Round></DockApp>
      <DockApp aria-label="Discord" $running><Round $color="#5865f2"><FaDiscord size={18} /></Round></DockApp>
      <DockApp aria-label="Photos" $running><Photos /></DockApp>
    </Dock>
    <Tray>
      <MdExpandLess size={21} />
      {TrayIcons.cloud}
      {TrayIcons.sync}
      {TrayIcons.location}
      УКР
      <TrayGroup>{TrayIcons.wifi}{TrayIcons.volume}{TrayIcons.battery}</TrayGroup>
      <Clock>18:39<br />12.02.2026</Clock>
    </Tray>
  </Taskbar>
);

const App = () => {
  return (
    <Screen>
      <GlobalStyle />
      <Browser />
      <Page>
        <AdsHeader />
        <Body>
          <Navigation />
          <Main>
            <Filters />
            <Overview />
            <CampaignTable />
          </Main>
          <PageScroll />
        </Body>
      </Page>
      <Desktop />
      <Watermark>
        <strong>Активация Windows</strong>
        Чтобы активировать Windows, перейдите в раздел<br />"Параметры".
      </Watermark>
      <Pointer width="13" height="20" viewBox="0 0 13 20" fill="#fff" stroke="#202124">
        <path d="M1 1v15l3-3 3 6 2-1-2-6h5z" />
      </Pointer>
    </Screen>
  );
};

export default App;
